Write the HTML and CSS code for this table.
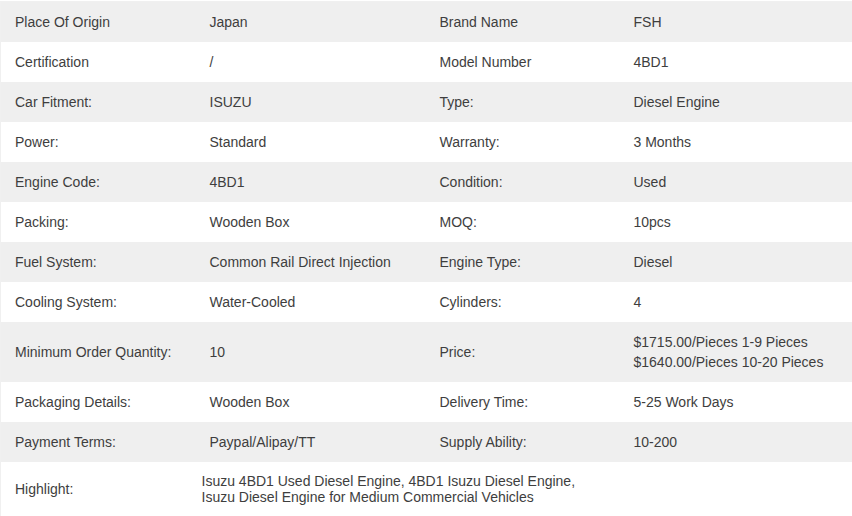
FILE: index.html
```html
<!DOCTYPE html>
<html>
<head>
<meta charset="utf-8">
<link rel="stylesheet" href="styles.css">
</head>
<body>
<table class="spec">
  <colgroup>
    <col class="c1"><col class="c2"><col class="c3"><col class="c4">
  </colgroup>
  <tr><th>Place Of Origin</th><td>Japan</td><th>Brand Name</th><td>FSH</td></tr>
  <tr><th>Certification</th><td>/</td><th>Model Number</th><td>4BD1</td></tr>
  <tr><th>Car Fitment:</th><td>ISUZU</td><th>Type:</th><td>Diesel Engine</td></tr>
  <tr><th>Power:</th><td>Standard</td><th>Warranty:</th><td>3 Months</td></tr>
  <tr><th>Engine Code:</th><td>4BD1</td><th>Condition:</th><td>Used</td></tr>
  <tr><th>Packing:</th><td>Wooden Box</td><th>MOQ:</th><td>10pcs</td></tr>
  <tr><th>Fuel System:</th><td>Common Rail Direct Injection</td><th>Engine Type:</th><td>Diesel</td></tr>
  <tr><th>Cooling System:</th><td>Water-Cooled</td><th>Cylinders:</th><td>4</td></tr>
  <tr class="tall"><th>Minimum Order Quantity:</th><td>10</td><th>Price:</th><td>$1715.00/Pieces 1-9 Pieces<br>$1640.00/Pieces 10-20 Pieces</td></tr>
  <tr><th>Packaging Details:</th><td>Wooden Box</td><th>Delivery Time:</th><td>5-25 Work Days</td></tr>
  <tr><th>Payment Terms:</th><td>Paypal/Alipay/TT</td><th>Supply Ability:</th><td>10-200</td></tr>
  <tr class="hl"><th>Highlight:</th><td colspan="3"><p>Isuzu 4BD1 Used Diesel Engine, 4BD1 Isuzu Diesel Engine,<br>Isuzu Diesel Engine for Medium Commercial Vehicles</p></td></tr>
</table>
</body>
</html>
```

FILE: styles.css
```css
html, body {
  margin: 0;
  padding: 0;
  background: #ffffff;
}
body {
  font-family: "Liberation Sans", Arial, sans-serif;
  font-size: 14px;
  color: #3e3e3e;
}
.spec {
  width: 852px;
  border-collapse: collapse;
  table-layout: fixed;
  border: 1px solid #f0f0f0;
  margin-top: 1px;
}
.c1 { width: 195px; }
.c2 { width: 230px; }
.c3 { width: 194px; }
.c4 { width: 233px; }
.spec th, .spec td {
  height: 40px;
  padding: 0 0 0 14px;
  text-align: left;
  font-weight: normal;
  line-height: 20px;
  vertical-align: middle;
  box-sizing: border-box;
}
.spec tr:nth-child(odd) { background: #efefef; }
.spec tr:nth-child(even) { background: #ffffff; }
.spec tr.tall th, .spec tr.tall td { height: 60px; }
.spec tr.hl th, .spec tr.hl td { height: 56px; }
.spec tr.hl td { padding-left: 6px; }
.spec tr.hl p {
  margin: 0;
  line-height: 16px;
}
```
